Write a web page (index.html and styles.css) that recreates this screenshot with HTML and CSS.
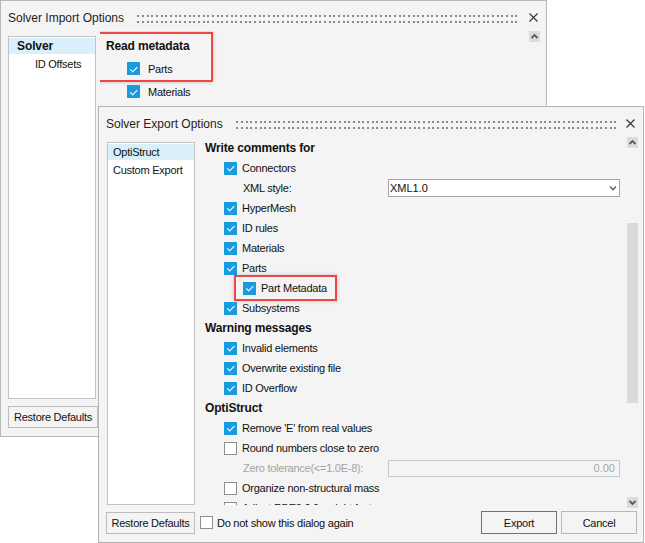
FILE: index.html
```html
<!DOCTYPE html>
<html lang="en">
<head>
<meta charset="utf-8">
<title>Solver Options</title>
<link rel="stylesheet" href="styles.css">
</head>
<body>
<div class="desk">

  <section class="dlg dlg-import">
    <header class="tb">
      <span class="tt">Solver Import Options</span>
      <span class="grip"></span>
      <svg class="x" width="9" height="9" viewBox="0 0 9 9"><path d="M0.5 0.5L8.5 8.5M8.5 0.5L0.5 8.5" stroke="#333" stroke-width="1.1" fill="none"/></svg>
    </header>
    <div class="main">
      <ul class="tree">
        <li class="ti sel root">Solver</li>
        <li class="ti child">ID Offsets</li>
      </ul>
      <div class="pane pane-import">
        <div class="hlgrp">
          <div class="row hd">Read metadata</div>
          <div class="row l1"><span class="cb on"></span>Parts</div>
        </div>
        <div class="row l1"><span class="cb on"></span>Materials</div>
      </div>
      <div class="sb">
        <span class="arr"><svg width="11" height="11" viewBox="0 0 11 11"><path d="M2.5 7L5.5 4L8.5 7" stroke="#5a5a5a" stroke-width="1.8" fill="none"/></svg></span>
      </div>
    </div>
    <footer class="ft">
      <button class="btn btn-restore btn-restore-imp">Restore Defaults</button>
    </footer>
  </section>

  <section class="dlg dlg-export">
    <header class="tb">
      <span class="tt">Solver Export Options</span>
      <span class="grip"></span>
      <svg class="x" width="9" height="9" viewBox="0 0 9 9"><path d="M0.5 0.5L8.5 8.5M8.5 0.5L0.5 8.5" stroke="#333" stroke-width="1.1" fill="none"/></svg>
    </header>
    <div class="main">
      <ul class="tree">
        <li class="ti sel">OptiStruct</li>
        <li class="ti">Custom Export</li>
      </ul>
      <div class="pane">
        <div class="row hd">Write comments for</div>
        <div class="row l1"><span class="cb on"></span>Connectors</div>
        <div class="row l2"><span class="lbl">XML style:</span>
          <span class="select"><span class="val">XML1.0</span><svg width="8" height="6" viewBox="0 0 8 6"><path d="M1 1.5L4 4.5L7 1.5" stroke="#666" stroke-width="1.6" fill="none"/></svg></span>
        </div>
        <div class="row l1"><span class="cb on"></span>HyperMesh</div>
        <div class="row l1"><span class="cb on"></span>ID rules</div>
        <div class="row l1"><span class="cb on"></span>Materials</div>
        <div class="row l1"><span class="cb on"></span>Parts</div>
        <div class="row l2 hlrow"><span class="cb on"></span>Part Metadata</div>
        <div class="row l1"><span class="cb on"></span>Subsystems</div>
        <div class="row hd">Warning messages</div>
        <div class="row l1"><span class="cb on"></span>Invalid elements</div>
        <div class="row l1"><span class="cb on"></span>Overwrite existing file</div>
        <div class="row l1"><span class="cb on"></span>ID Overflow</div>
        <div class="row hd">OptiStruct</div>
        <div class="row l1"><span class="cb on"></span>Remove 'E' from real values</div>
        <div class="row l1"><span class="cb"></span>Round numbers close to zero</div>
        <div class="row l2"><span class="lbl dim">Zero tolerance(&lt;=1.0E-8):</span><span class="num">0.00</span></div>
        <div class="row l1"><span class="cb"></span>Organize non-structural mass</div>
        <div class="row l1"><span class="cb"></span>Adjust RBE3 0.0 weight factor</div>
      </div>
      <div class="sb">
        <span class="arr"><svg width="11" height="11" viewBox="0 0 11 11"><path d="M2.5 7L5.5 4L8.5 7" stroke="#5a5a5a" stroke-width="1.8" fill="none"/></svg></span>
        <span class="thumb"></span>
        <span class="sb-fill"></span>
        <span class="arr arr-down"><svg width="11" height="11" viewBox="0 0 11 11"><path d="M2.5 4L5.5 7L8.5 4" stroke="#5a5a5a" stroke-width="1.8" fill="none"/></svg></span>
      </div>
    </div>
    <footer class="ft">
      <button class="btn btn-restore">Restore Defaults</button>
      <span class="cb cb-foot"></span><span>Do not show this dialog again</span>
      <span class="ft-fill"></span>
      <button class="btn btn-act btn-default">Export</button>
      <button class="btn btn-act btn-cancel">Cancel</button>
    </footer>
  </section>

</div>
</body>
</html>
```

FILE: styles.css
```css
html, body {
  margin: 0;
  padding: 0;
}
body {
  width: 645px;
  height: 543px;
  overflow: hidden;
  background: #ffffff;
  font-family: "Liberation Sans", Arial, sans-serif;
  font-size: 11px;
  letter-spacing: -0.25px;
  color: #111111;
}
.desk {
  position: relative;
  width: 645px;
  height: 543px;
}
.dlg {
  position: absolute;
  box-sizing: border-box;
  height: 437px;
  border: 1px solid #b9b9b9;
  background: #f4f4f4;
  display: flex;
  flex-direction: column;
}
.dlg-import {
  left: 0;
  top: 0;
  width: 547px;
}
.dlg-export {
  left: 98px;
  top: 106px;
  width: 546px;
  border-color: #b4b4b4;
}

/* title bar */
.tb {
  flex: none;
  height: 30px;
  display: flex;
  align-items: flex-start;
  padding: 0 8px 0 7px;
}
.tt {
  font-size: 12px;
  letter-spacing: 0;
  line-height: 16px;
  margin-top: 9px;
  color: #1e1e1e;
}
.grip {
  flex: 1;
  height: 8px;
  margin: 14px 9px 0 13px;
  background-image:
    linear-gradient(to bottom, transparent 0 2px, #f4f4f4 2px 6px),
    linear-gradient(to right, #8a8a8a 0 2px, transparent 2px 5px, #8a8a8a 5px 7px, transparent 7px 10px, #8a8a8a 10px 12px, transparent 12px 14px);
  background-size: 14px 6px, 14px 6px;
}
.x {
  flex: none;
  margin-top: 12px;
}

/* main area */
.main {
  flex: 1;
  min-height: 0;
  display: flex;
  padding: 0 5px 0 8px;
}
.dlg-import .main {
  padding: 0 6px 0 7px;
}
.tree {
  flex: none;
  width: 88px;
  box-sizing: border-box;
  margin: 5px 0 4px;
  padding: 1px 0 0;
  list-style: none;
  background: #ffffff;
  border: 1px solid #c3c3c3;
}
.ti {
  height: 16px;
  line-height: 16px;
  margin-bottom: 2px;
  padding-left: 5px;
  white-space: nowrap;
}
.ti.sel {
  background: #d9eff9;
}
.ti.root {
  padding-left: 8px;
  font-weight: bold;
  font-size: 12px;
  letter-spacing: -0.1px;
}
.ti.child {
  padding-left: 26px;
}

.pane {
  flex: 1;
  min-width: 0;
  margin: 0 0 4px 4px;
  padding: 1px 1px 0 6px;
  overflow: hidden;
}
.pane-import {
  padding-top: 3px;
}

.row {
  display: flex;
  align-items: center;
  height: 20px;
  white-space: nowrap;
}
.hd {
  font-weight: bold;
  font-size: 12px;
  letter-spacing: -0.15px;
}
.l1 {
  padding-left: 19px;
}
.l2 {
  padding-left: 38px;
}
.pane-import .row {
  height: 23px;
}
.pane-import .l1 {
  padding-left: 21px;
}
.pane-import .cb {
  margin-right: 8px;
}

.cb {
  flex: none;
  position: relative;
  width: 13px;
  height: 13px;
  box-sizing: border-box;
  margin-right: 5px;
  border: 1px solid #8f8f8f;
  background: #ffffff;
}
.cb.on {
  background: #1a9be0;
  border-color: #1a9be0;
}
.cb.on::after {
  content: "";
  position: absolute;
  left: 3.5px;
  top: 1.5px;
  width: 2.6px;
  height: 5.5px;
  border: solid #ffffff;
  border-width: 0 1.6px 1.6px 0;
  transform: rotate(45deg);
}

/* highlights */
.hlgrp {
  position: relative;
}
.hlgrp::after {
  content: "";
  position: absolute;
  top: -2px;
  bottom: -2px;
  left: -8px;
  width: 115px;
  box-sizing: border-box;
  border: 2px solid #ee4545;
  box-shadow: 0 0 4px rgba(0, 0, 0, 0.22);
}
.hlrow {
  position: relative;
}
.hlrow::after {
  content: "";
  position: absolute;
  top: -3px;
  bottom: -3px;
  left: 29px;
  width: 103px;
  box-sizing: border-box;
  border: 2px solid #ee4545;
  box-shadow: 0 0 4px rgba(0, 0, 0, 0.22);
}

.lbl {
  flex: none;
  width: 145px;
}
.dim {
  color: #a3a3a3;
}
.select {
  flex: none;
  width: 232px;
  height: 18px;
  box-sizing: border-box;
  border: 1px solid #a6a6a6;
  background: #ffffff;
  display: flex;
  align-items: center;
  justify-content: space-between;
  padding: 0 2px 0 1px;
}
.val {
  letter-spacing: 0;
  color: #111;
}
.num {
  flex: none;
  width: 232px;
  height: 17px;
  box-sizing: border-box;
  border: 1px solid #c8c8c8;
  background: #f4f4f4;
  color: #a8a8a8;
  text-align: right;
  line-height: 15px;
  padding-right: 4px;
  letter-spacing: 0;
}

/* scroll bar */
.sb {
  flex: none;
  width: 11px;
  margin-left: 5px;
  display: flex;
  flex-direction: column;
}
.arr {
  flex: none;
  width: 11px;
  height: 11px;
  background: #dcdcdc;
  display: block;
}
.arr svg {
  display: block;
}
.arr-down {
  margin-bottom: 1px;
}
.thumb {
  flex: none;
  margin-top: 75px;
  height: 180px;
  background: #dadada;
}
.sb-fill {
  flex: 1;
}

/* footer */
.ft {
  flex: none;
  height: 23px;
  margin: 2px 0 8px;
  display: flex;
  align-items: center;
  padding: 0 6px 0 7px;
}
.btn {
  box-sizing: border-box;
  height: 22px;
  padding: 0;
  border: 1px solid #bdbdbd;
  background: #f4f4f4;
  font-family: inherit;
  font-size: 11px;
  letter-spacing: -0.25px;
  color: #111;
}
.btn-restore {
  width: 89px;
}
.btn-restore-imp {
  width: 90px;
}
.cb-foot {
  margin-left: 5px;
  margin-right: 4px;
}
.ft-fill {
  flex: 1;
}
.btn-act {
  width: 76px;
  height: 23px;
}
.btn-default {
  border-color: #707070;
}
.btn-cancel {
  margin-left: 4px;
  border-color: #b8b8b8;
}
```
